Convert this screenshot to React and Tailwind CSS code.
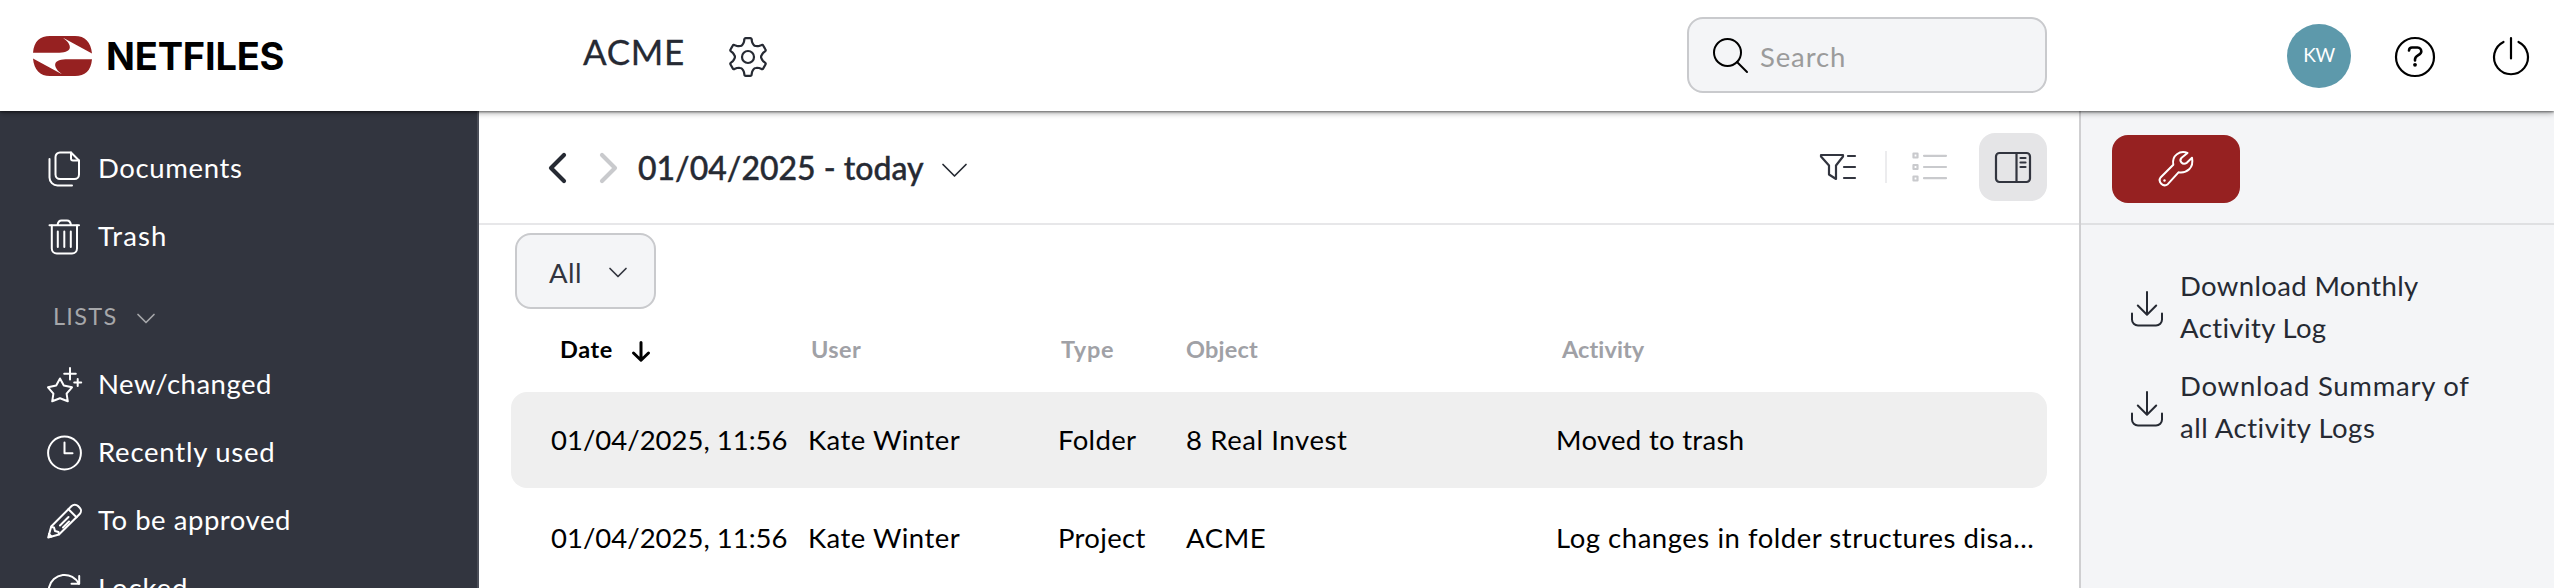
import clsx from 'clsx';

const polar = (r, deg) => {
  const a = (deg * Math.PI) / 180;
  return `${(19 + r * Math.sin(a)).toFixed(2)} ${(20 - r * Math.cos(a)).toFixed(2)}`;
};

// Six rounded lobes around the centre
const GEAR_PATH = [0, 60, 120, 180, 240, 300]
  .map((a, i) => `${i === 0 ? 'M' : 'L'}${polar(17.6, a - 12)} Q${polar(19.4, a - 11)} ${polar(19, a - 6)} L${polar(19, a + 6)} Q${polar(19.4, a + 11)} ${polar(17.6, a + 12)} L${polar(15.6, a + 15)} Q${polar(14.2, a + 19)} ${polar(13.4, a + 25)} Q${polar(12.8, a + 30)} ${polar(13.4, a + 35)} Q${polar(14.2, a + 41)} ${polar(15.6, a + 45)}`)
  .join(' ') + 'Z';

function Icon({ w, h, stroke = 2, className, children }) {
  return (
    <svg
      width={w}
      height={h}
      viewBox={`0 0 ${w} ${h}`}
      fill="none"
      stroke="currentColor"
      strokeWidth={stroke}
      strokeLinecap="round"
      strokeLinejoin="round"
      className={clsx('shrink-0 overflow-visible', className)}
    >
      {children}
    </svg>
  );
}

function LogoMark() {
  const half = 'M0 16.8C1 5 7 0 17 0H42C52 0 58 6 59 17.5L30 1.8C35 5.5 37.3 9 36.8 12C36 15.6 31 16.8 24 16.8Z';
  return (
    <svg width="59" height="40" viewBox="0 0 59 40" fill="#962121" className="shrink-0">
      <path d={half} />
      <path d={half} transform="rotate(180 29.5 20)" />
    </svg>
  );
}

const DocumentsIcon = () => (
  <Icon w={35} h={36}>
    <path d="M13 1.5H24L32 9.500V23.500A4.500 4.500 0 0 1 27.500 28H13A4.500 4.500 0 0 1 8.500 23.500V6A4.500 4.500 0 0 1 13 1.500Z" />
    <path d="M24 1.500V7.500A2 2 0 0 0 26 9.500H32" />
    <path d="M2.500 8V26.500A8 8 0 0 0 10.500 34.500H25" />
  </Icon>
);

const TrashIcon = () => (
  <Icon w={35} h={36}>
    <path d="M2.500 6.300H32M10.500 6C11 3 12.500 1.500 14.500 1.500H20C22 1.500 23.500 3 24 6" />
    <path d="M4.800 6.500V29.500A5 5 0 0 0 9.800 34.500H25A5 5 0 0 0 30 29.500V6.500" />
    <path d="M10.800 12.500V28M17.300 12.500V28M23.800 12.500V28" />
  </Icon>
);

const StarIcon = () => (
  <Icon w={35} h={36}>
    <path d="M13 11.500L16.800 18.500L25 20.300L19.600 26.600L20.800 34.300L13 31.300L5.200 34.300L6.400 26.600L1 20.300L9.200 18.500Z" />
    <path d="M23 1V12.600M17.200 6.700H28.800M30.700 12V19M27.200 15.500H34.200" />
  </Icon>
);

const ClockIcon = () => (
  <Icon w={35} h={36}>
    <circle cx="17.500" cy="18" r="16.400" />
    <path d="M17.500 7.500V18.300H25.500" />
  </Icon>
);

const PencilIcon = () => (
  <Icon w={35} h={36}>
    <path d="M1.200 34.500L4.200 23.500L24.600 3A4.500 4.500 0 0 1 31 3L32.700 4.700A4.500 4.500 0 0 1 32.700 11L12 31.500Z" />
    <path d="M21.500 6.200L29.500 14.200M4.500 24L7 24.500L8 28L11.500 29L12 31.300M13 22.500L21.500 14M16 24.500L22 18.500M2 31L4.500 33.500" />
  </Icon>
);

const LockedIcon = () => (
  <Icon w={35} h={36}>
    <path d="M2 16.500A16 16 0 0 1 32 13M32.200 5V12.800H24.500" />
    <path d="M33 20.500A16 16 0 0 1 3 24M2.800 32V24.200H10.500" />
  </Icon>
);

const Chevron = ({ w = 18, className }) => (
  <Icon w={w} h={w / 2} stroke={1.7} className={className}>
    <path d={`M1 0.500L${w / 2} ${w / 2 - 0.5}L${w - 1} 0.500`} />
  </Icon>
);

const DownloadIcon = () => (
  <Icon w={32} h={36} stroke={2} className="mt-[3px]">
    <path d="M16 1V23.500M6.800 14.500L16 23.700L25.200 14.500M1 22.500V28.500A6 6 0 0 0 7 34.500H25A6 6 0 0 0 31 28.500V22.500" />
  </Icon>
);

const navTop = [
  { label: 'Documents', icon: DocumentsIcon, tracking: 'tracking-[0.63px]' },
  { label: 'Trash', icon: TrashIcon, tracking: 'tracking-[1.1px]' },
];

const navLists = [
  { label: 'New/changed', icon: StarIcon, tracking: 'tracking-[0.49px]' },
  { label: 'Recently used', icon: ClockIcon, tracking: 'tracking-[0.77px]' },
  { label: 'To be approved', icon: PencilIcon, tracking: 'tracking-[0.54px]' },
  { label: 'Locked', icon: LockedIcon, tracking: 'tracking-[0.89px]' },
];

const rows = [
  { date: '01/04/2025, 11:56', user: 'Kate Winter', type: 'Folder', object: '8 Real Invest', activity: 'Moved to trash', selected: true },
  { date: '01/04/2025, 11:56', user: 'Kate Winter', type: 'Project', object: 'ACME', activity: 'Log changes in folder structures disa...' },
];

const GRID = 'grid grid-cols-[257px_250px_128px_370px_1fr] items-center pl-10 whitespace-nowrap';

function NavItem({ label, icon: NavIcon, tracking }) {
  return (
    <a className="flex h-[68px] items-center gap-4 pl-[47px] text-white">
      <NavIcon />
      <span className={clsx('pb-[3px] text-[27.5px]', tracking)}>{label}</span>
    </a>
  );
}

function Header() {
  return (
    <header className="relative z-10 flex h-[111px] shrink-0 items-center bg-white shadow-[0_1px_2px_rgba(0,0,0,0.45),0_2px_6px_rgba(0,0,0,0.35)]">
      <div className="flex w-[583px] items-center gap-3.5 pl-[33px]">
        <LogoMark />
        <span className="font-['Inter'] text-[38px] leading-none font-bold tracking-[-0.2px] text-black">NETFILES</span>
      </div>
      <span className="pb-2 text-[35px] tracking-[0.7px] [-webkit-text-stroke:0.3px]">ACME</span>
      <Icon w={38} h={40} stroke={2.2} className="mt-0.5 ml-11">
        <path d={GEAR_PATH} />
        <circle cx="19" cy="20" r="6" />
      </Icon>
      <div className="mb-[1px] ml-auto flex h-19 w-[360px] items-center rounded-2xl border-2 border-[#c9cacd] bg-[#f4f5f7] pl-6 text-black">
        <Icon w={35} h={35} stroke={2}>
          <circle cx="14.500" cy="14.500" r="13.500" />
          <path d="M24 24L34 34" />
        </Icon>
        <span className="mt-[3px] ml-3 text-[27.5px] tracking-[0.88px] text-[#9b9b9b]">Search</span>
      </div>
      <div className="ml-[240px] flex size-16 items-center justify-center rounded-full bg-[#5d99ab] text-[19px] tracking-[-0.5px] text-white">KW</div>
      <Icon w={40} h={40} stroke={2.2} className="mt-[3px] ml-11 text-black">
        <circle cx="20" cy="20" r="19" />
        <path d="M14 13.500C14.200 11 15.500 10.500 17 10.500H22.500C25 10.500 26.300 12.500 26.300 14.500C26.300 18.500 20 18 20 22.500V23.500" strokeWidth="2.600" />
        <circle cx="20" cy="27.800" r="1.900" fill="currentColor" stroke="none" />
      </Icon>
      <Icon w={36} h={38} stroke={2.2} className="mr-[25px] ml-[58px] text-black">
        <path d="M18 1V21.500M10.500 5A17 17 0 1 0 25.500 5" />
      </Icon>
    </header>
  );
}

function Sidebar() {
  return (
    <aside className="w-[479px] shrink-0 border-r-2 border-[#4b4e58] bg-[#32353f] pt-6">
      {navTop.map((item) => <NavItem key={item.label} {...item} />)}
      <div className="flex h-20 items-center gap-5 pb-3 pl-[53px] text-[#a6a7aa]">
        <span className="pt-6 text-[23.5px] tracking-[1.3px]">LISTS</span>
        <Chevron className="mt-[26px]" />
      </div>
      {navLists.map((item) => <NavItem key={item.label} {...item} />)}
    </aside>
  );
}

function Toolbar() {
  return (
    <div className="flex h-[114px] items-center border-b-2 border-[#e7e7e9] pt-0.5 pl-[70px]">
      <Icon w={17} h={30} stroke={4.2}>
        <path d="M15 2L2 15L15 28" />
      </Icon>
      <Icon w={17} h={30} stroke={4.2} className="ml-[34px] text-[#c9cacd]">
        <path d="M2 2L15 15L2 28" />
      </Icon>
      <span className="ml-[21px] text-[32px] font-medium [-webkit-text-stroke:0.4px]">01/04/2025 - today</span>
      <Chevron w={25} className="mt-1 ml-[18px]" />
      <div className="ml-auto flex items-center pr-8 pb-0.5">
        <Icon w={36} h={28} stroke={2.2} className="text-[#32353f]">
          <path d="M1 2H23V3.500L16 12.500V26L9 21.500V12.500L1 3.500Z" />
          <path d="M28 3H35M24 14H35M24 25H35" />
        </Icon>
        <div className="ml-[29px] h-8 w-0.5 bg-[#ececee]" />
        <Icon w={35} h={30} stroke={2.2} className="ml-[25px] text-[#c9cacd]">
          <path d="M1.500 1.500H5.500V5.500H1.500ZM1.500 13H5.500V17H1.500ZM1.500 24.500H5.500V28.500H1.500ZM12 3.800H34M12 15H34M12 26.200H34" />
        </Icon>
        <button className="ml-8 flex size-17 items-center justify-center rounded-2xl bg-[#e5e5e7] text-[#32353f]">
          <Icon w={36} h={31} stroke={2.2}>
            <rect x="1" y="1" width="34" height="29" rx="3.500" />
            <path d="M21.500 1V30M25.500 6H30.500M25.500 10.500H30.500M25.500 15H30.500" />
          </Icon>
        </button>
      </div>
    </div>
  );
}

function ActivityTable() {
  return (
    <div className="pr-8 pl-8">
      <div className={clsx(GRID, 'h-[83px] pb-0.5 text-[23.5px] font-bold text-[#a0a1a6]')}>
        <div className="flex items-center gap-[19px] pl-[9px] text-black">
          <span className="tracking-[0.6px]">Date</span>
          <Icon w={18} h={21} stroke={3} className="mt-1">
            <path d="M9 1.500V19M1.500 12L9 19.300L16.500 12" />
          </Icon>
        </div>
        <div className="pl-[3px] tracking-[0.4px]">User</div>
        <div className="pl-[3px] tracking-[0.7px]">Type</div>
        <div className="tracking-[0.2px]">Object</div>
        <div className="pl-[6px] tracking-[0.1px]">Activity</div>
      </div>
      <div className="space-y-0.5 text-[27.5px] text-black">
        {rows.map((row) => (
          <div key={row.type} className={clsx(GRID, 'h-24 rounded-2xl', row.selected && 'bg-[#efefef]')}>
            <div>{row.date}</div>
            <div className="tracking-[0.46px]">{row.user}</div>
            <div className="tracking-[0.33px]">{row.type}</div>
            <div className="tracking-[0.6px]">{row.object}</div>
            <div className={row.selected ? 'tracking-[0.3px]' : 'tracking-[0.53px]'}>{row.activity}</div>
          </div>
        ))}
      </div>
    </div>
  );
}

function ToolPanel() {
  return (
    <aside className="w-[475px] shrink-0 border-l-2 border-[#cfcfd1] bg-[#f4f5f7]">
      <div className="flex h-[114px] items-center border-b-2 border-[#dfe0e2] pl-[31px]">
        <button className="mt-[3px] flex h-17 w-32 items-center justify-center rounded-2xl bg-[#962121] text-white">
          <Icon w={36} h={36} stroke={2}>
            <path d="M29.500 2C22 -1 13.500 4.500 15.300 13.700L2.800 26.200A5 5 0 0 0 9.800 33.200L20.500 21.300C29 22.500 36 17 34 6.800L28.800 11.800C24.500 14.500 20.500 10 23.600 6.800Z" />
            <circle cx="6.500" cy="29.500" r="1.200" fill="currentColor" stroke="none" />
          </Icon>
        </button>
      </div>
      <div className="space-y-4 pt-[40px] pl-[50px] text-[27.5px] leading-[42px]">
        <a className="flex items-center gap-[17px]">
          <DownloadIcon />
          <span><span className="tracking-[0.35px]">Download Monthly</span><br /><span className="tracking-[0.38px]">Activity Log</span></span>
        </a>
        <a className="flex items-center gap-[17px]">
          <DownloadIcon />
          <span><span className="tracking-[0.74px]">Download Summary of</span><br /><span className="tracking-[0.51px]">all Activity Logs</span></span>
        </a>
      </div>
    </aside>
  );
}

export default function App() {
  return (
    <div className="flex h-[588px] flex-col overflow-hidden bg-white font-['Lato',sans-serif] text-[#262a33]">
      <Header />
      <div className="flex min-h-0 flex-1">
        <Sidebar />
        <main className="min-w-0 flex-1">
          <Toolbar />
          <div className="pt-2 pl-9">
            <button className="flex h-19 w-[141px] items-center rounded-2xl border-2 border-[#c9cacd] bg-[#f4f5f7] pl-8 text-[27.5px] text-[#32353f]">
              <span className="pt-1 tracking-[0.5px]">All</span>
              <Chevron className="mt-0.5 ml-[27px]" />
            </button>
          </div>
          <ActivityTable />
        </main>
        <ToolPanel />
      </div>
    </div>
  );
}
